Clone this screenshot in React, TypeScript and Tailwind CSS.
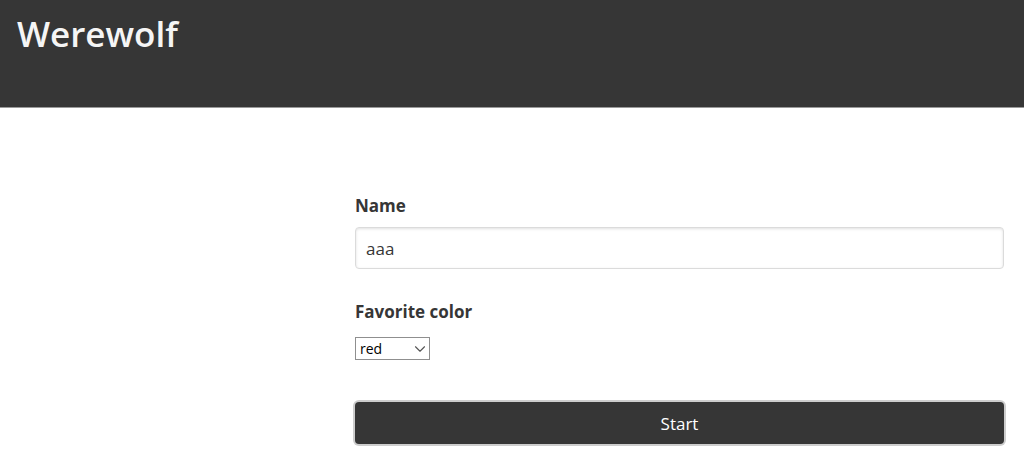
import React, { useState } from "react";
import { ChevronDown } from "lucide-react";

export default function App() {
  const [name, setName] = useState("aaa");
  const [color, setColor] = useState("red");

  return (
    <div className="min-h-screen bg-white font-['Open_Sans','Noto_Sans',sans-serif] text-[#363636]">
      <header className="border-b border-[#9a9a9a] bg-[#363636] px-[17px] pt-3 pb-[51px]">
        <h1 className="text-[35px] leading-[44px] font-semibold text-[#f5f5f5]">Werewolf</h1>
      </header>
      <main className="grid grid-cols-[355fr_649fr] pt-[84px] pr-5 pb-[19px]">
        <form className="col-start-2" onSubmit={(e) => e.preventDefault()}>
          <label htmlFor="name" className="block text-[17px] leading-7 font-bold">Name</label>
          <input
            id="name"
            type="text"
            value={name}
            onChange={(e) => setName(e.target.value)}
            className="mt-[7px] block h-[42px] w-full rounded-[4px] border border-[#dbdbdb] bg-white px-[10px] text-[17px] shadow-[inset_0_1px_3px_rgba(10,10,10,0.12)] outline-none"
          />
          <label htmlFor="color" className="mt-[29px] block text-[17px] leading-7 font-bold">Favorite color</label>
          <div className="mt-[11px] grid w-[75px] items-center">
            <select
              id="color"
              value={color}
              onChange={(e) => setColor(e.target.value)}
              className="col-start-1 row-start-1 h-[23px] w-full appearance-none border border-[#8f8f8f] bg-white px-1 pt-px text-[14px] leading-5 text-black outline-none"
            >
              <option>red</option>
              <option>green</option>
              <option>blue</option>
            </select>
            <ChevronDown className="pointer-events-none col-start-1 row-start-1 mr-px size-[18px] justify-self-end text-[#555555]" strokeWidth={1.5} />
          </div>
          <button
            type="submit"
            className="mt-[42px] block h-[42px] w-full rounded-[4px] bg-[#363636] pt-[2px] text-[17px] text-white shadow-[0_0_0_2px_rgba(54,54,54,0.25)]"
          >
            Start
          </button>
        </form>
      </main>
    </div>
  );
}
